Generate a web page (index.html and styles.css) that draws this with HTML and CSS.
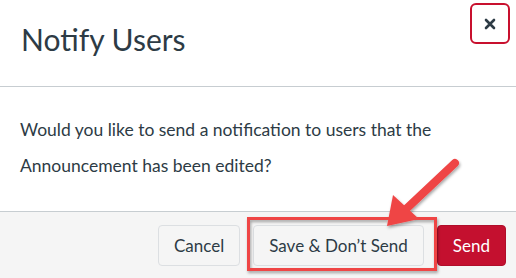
FILE: index.html
```html
<!DOCTYPE html>
<html lang="en">
<head>
  <meta charset="UTF-8">
  <title>Notify Users</title>
  <link rel="stylesheet" href="styles.css">
</head>
<body>

  <div class="dialog">
    <div class="dialog-header">
      <h1 class="dialog-title">Notify Users</h1>
      <button class="close-btn" aria-label="Close">
        <svg width="12" height="12" viewBox="0 0 12 12"><path d="M2 2 L10 10 M10 2 L2 10" stroke="#2d3b45" stroke-width="2.6" stroke-linecap="round"/></svg>
      </button>
    </div>

    <div class="dialog-body">
      <p>Would you like to send a notification to users that the Announcement has been edited?</p>
    </div>

    <div class="dialog-footer">
      <button class="btn">Cancel</button>
      <button class="btn">Save &amp; Don’t Send</button>
      <button class="btn primary">Send</button>
    </div>
  </div>

  <!-- screenshot annotation -->
  <svg class="callout" width="516" height="278" viewBox="0 0 516 278">
    <defs>
      <filter id="shade" x="-20%" y="-20%" width="140%" height="140%">
        <feDropShadow dx="1" dy="2" stdDeviation="1.5" flood-color="#000" flood-opacity="0.35"/>
      </filter>
    </defs>
    <g filter="url(#shade)">
      <rect x="248.5" y="218.5" width="187" height="51" fill="none" stroke="#ef4545" stroke-width="3"/>
      <line x1="455" y1="163" x2="405" y2="210" stroke="#ef4545" stroke-width="8" stroke-linecap="round"/>
      <polygon points="387,226 393,195 419,219" fill="#ef4545"/>
    </g>
  </svg>

</body>
</html>
```

FILE: styles.css
```css
body {
  margin: 0;
  background: #fff;
  color: #2d3b45;
  font-family: Lato, "Open Sans", sans-serif;
}
.dialog {
  width: 516px;
  height: 278px;
  display: flex;
  flex-direction: column;
}
.dialog-header {
  display: flex;
  justify-content: space-between;
  align-items: flex-start;
  height: 86px;
  border-bottom: 1px solid #c7cdd1;
}
.dialog-title {
  margin: 20px 0 0 21px;
  font-size: 30px;
  font-weight: normal;
  line-height: 38px;
}
.close-btn {
  margin: 3px 6px 0 0;
  width: 40px;
  height: 41px;
  border: 2px solid #c8102e;
  border-radius: 6px;
  background: #fff;
  display: flex;
  align-items: center;
  justify-content: center;
  padding: 0;
}
.dialog-body {
  height: 124px;
  padding: 25px 20px 0;
  box-sizing: border-box;
}
.dialog-body p {
  margin: 0;
  font-size: 17.5px;
  line-height: 36px;
}
.dialog-footer {
  flex: 1;
  background: #f5f5f5;
  border-top: 1px solid #c7cdd1;
  display: flex;
  justify-content: flex-end;
  align-items: flex-start;
  gap: 13px;
  padding: 13px 10px 0;
}
.btn {
  height: 41px;
  padding: 0 15px;
  font-family: Lato, "Open Sans", sans-serif;
  font-size: 17px;
  color: #2d3b45;
  background: #f5f5f5;
  border: 1px solid #dcdfe2;
  border-radius: 4px;
}
.btn.primary {
  background: #c4102f;
  border-color: #b00e2a;
  color: #fff;
}
.callout {
  position: absolute;
  left: 0;
  top: 0;
  pointer-events: none;
}
```
